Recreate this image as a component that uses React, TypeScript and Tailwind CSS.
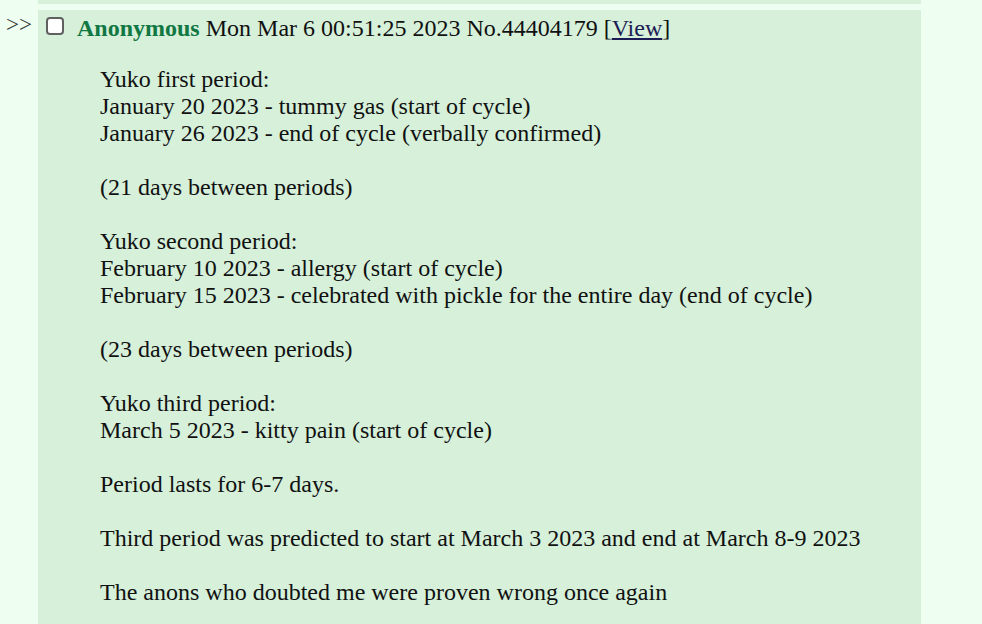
import React from "react";

const lines: string[] = [
  "Yuko first period:",
  "January 20 2023 - tummy gas (start of cycle)",
  "January 26 2023 - end of cycle (verbally confirmed)",
  "",
  "(21 days between periods)",
  "",
  "Yuko second period:",
  "February 10 2023 - allergy (start of cycle)",
  "February 15 2023 - celebrated with pickle for the entire day (end of cycle)",
  "",
  "(23 days between periods)",
  "",
  "Yuko third period:",
  "March 5 2023 - kitty pain (start of cycle)",
  "",
  "Period lasts for 6-7 days.",
  "",
  "Third period was predicted to start at March 3 2023 and end at March 8-9 2023",
  "",
  "The anons who doubted me were proven wrong once again",
];

export default function App() {
  return (
    <div className="min-h-screen bg-[#eefff2] font-['Liberation_Serif'] text-[24px] leading-[27px] text-[#111]">
      <div className="ml-[38px] w-[883px] h-[4px] bg-[#d6f0da]" />
      <div className="flex mt-[6px]">
        <div className="w-[38px] shrink-0 pl-[6px] pt-[4px] text-[23px] leading-[22px] text-[#333]">
          &gt;&gt;
        </div>
        <div className="w-[883px] bg-[#d6f0da] pb-[40px]">
          <div className="flex items-start pt-[5px] pl-[8px] whitespace-pre">
            <span className="inline-block mt-[2px] w-[18px] h-[18px] rounded-[4px] border-2 border-[#606060] bg-white mr-[13px]" />
            <span className="font-bold text-[#117743]">Anonymous</span>
            <span> Mon Mar 6 00:51:25 2023 No.44404179 [</span>
            <a className="text-[#1c1c54] underline">View</a>
            <span>]</span>
          </div>
          <div className="pl-[62px] mt-[24px]">
            {lines.map((l, i) => (
              <div key={i} className="h-[27px] whitespace-pre">
                {l}
              </div>
            ))}
          </div>
        </div>
      </div>
    </div>
  );
}
